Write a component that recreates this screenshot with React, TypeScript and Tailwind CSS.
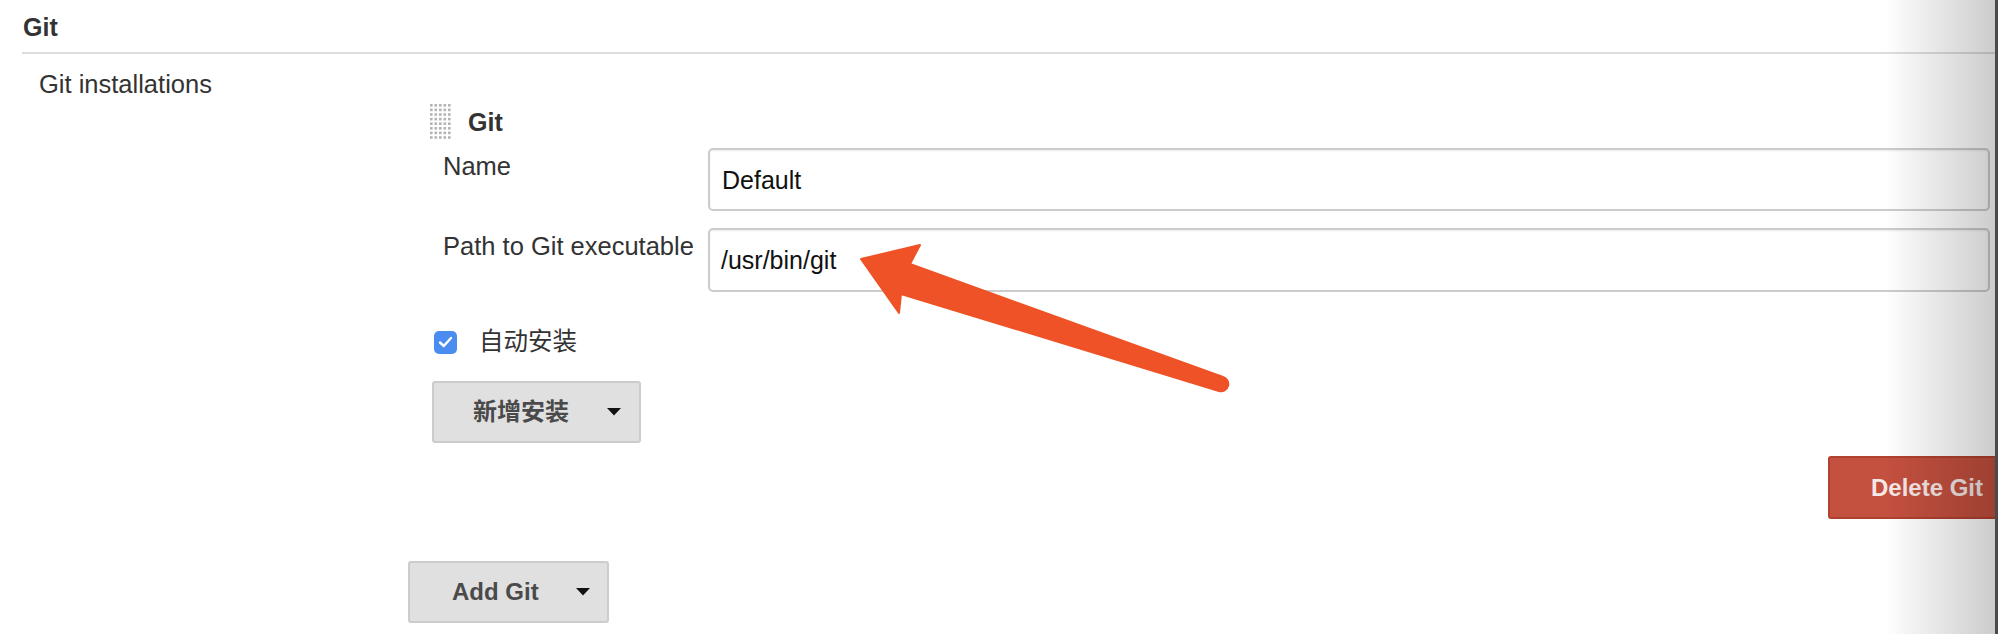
import React from "react";

function Grip() {
  const dots: React.ReactNode[] = [];
  for (let r = 0; r < 8; r++) {
    for (let c = 0; c < 5; c++) {
      dots.push(<rect key={`${r}-${c}`} x={1 + c * 4.5} y={1 + r * 4.6} width={2.6} height={2.6} fill="#b4b4b4" />);
    }
  }
  return (
    <svg width="23" height="37" viewBox="0 0 23 37">
      {dots}
    </svg>
  );
}

function Caret() {
  return (
    <svg width="14" height="8" viewBox="0 0 14 8">
      <path d="M0 0 L14 0 L7 7.5 Z" fill="#111" />
    </svg>
  );
}

export default function App() {
  return (
    <div className="relative w-[1998px] h-[634px] overflow-hidden bg-white font-['Liberation_Sans','Noto_Sans_CJK_SC',sans-serif] text-[#333]">
      <div className="pl-[23px] pt-[13px] text-[25px] leading-[28px] font-bold text-[#333]">Git</div>
      <div className="ml-[22px] mt-[11px] h-[2px] bg-[#dddddd]" />
      <div className="pl-[39px] mt-[16px] text-[25.5px] leading-[28px]">Git installations</div>

      <div className="ml-[429px] mt-[5px] flex items-center gap-[16px]">
        <Grip />
        <span className="text-[25px] leading-[28px] font-bold text-[#333]">Git</span>
      </div>

      <div className="ml-[443px] mr-[8px] mt-[8px] flex">
        <div className="w-[265px] pt-[4px] text-[25.5px] leading-[28px]">Name</div>
        <div className="flex-1 h-[63px] border-2 border-[#cccccc] rounded-[5px] shadow-[inset_0_1px_2px_rgba(0,0,0,0.08)] px-[12px] flex items-center text-[25px] leading-[28px] text-[#111]">
          Default
        </div>
      </div>

      <div className="ml-[443px] mr-[8px] mt-[17px] flex">
        <div className="w-[265px] pt-[4px] text-[25.5px] leading-[28px] whitespace-nowrap">Path to Git executable</div>
        <div className="flex-1 h-[64px] border-2 border-[#cccccc] rounded-[5px] shadow-[inset_0_1px_2px_rgba(0,0,0,0.08)] px-[11px] flex items-center text-[25px] leading-[28px] text-[#111]">
          /usr/bin/git
        </div>
      </div>

      <div className="ml-[434px] mt-[36px] flex items-center gap-[22px] h-[28px]">
        <div className="w-[23px] h-[23px] rounded-[5px] bg-[#4a8cf0] flex items-center justify-center">
          <svg width="15" height="12" viewBox="0 0 15 12">
            <path d="M2 6.5 L5.8 10 L13 2" stroke="#fff" strokeWidth="2.4" fill="none" strokeLinecap="round" strokeLinejoin="round" />
          </svg>
        </div>
        <span className="text-[24.5px] leading-[28px] text-[#333]">自动安装</span>
      </div>

      <div className="ml-[432px] mt-[25px] w-[209px] h-[62px] bg-[#e0e0e0] border-2 border-[#cccccc] rounded-[3px] flex items-center pl-[39px] pr-[18px] justify-between">
        <span className="text-[24px] leading-[28px] font-bold text-[#4a4a4a]">新增安装</span>
        <Caret />
      </div>

      <div className="mt-[13px] mr-[-28px] flex justify-end">
        <div className="h-[63px] bg-[#c4503f] border-2 border-[#b0412f] rounded-[3px] flex items-center px-[41px] text-[24px] leading-[28px] font-bold text-[#f6e8e6]">
          Delete Git
        </div>
      </div>

      <div className="ml-[408px] mt-[42px] w-[201px] h-[62px] bg-[#e0e0e0] border-2 border-[#cccccc] rounded-[3px] flex items-center pl-[42px] pr-[17px] justify-between">
        <span className="text-[24px] leading-[28px] font-bold text-[#4a4a4a]">Add Git</span>
        <Caret />
      </div>

      <svg className="absolute left-0 top-0 pointer-events-none" width="1998" height="634" viewBox="0 0 1998 634">
        <path
          d="M861 259 L920 245 L910 264 L1223 377 A7 7 0 0 1 1219 391 L901 294 L899 313 Z"
          fill="#ee5226"
          stroke="#ee5226"
          strokeWidth="2"
          strokeLinejoin="round"
        />
      </svg>

      <div className="absolute right-[3px] top-0 h-full w-[110px] bg-gradient-to-r from-[rgba(0,0,0,0)] to-[rgba(0,0,0,0.2)] pointer-events-none" />
      <div className="absolute right-0 top-0 h-full w-[3px] bg-[#4a4a4a]" />
    </div>
  );
}
